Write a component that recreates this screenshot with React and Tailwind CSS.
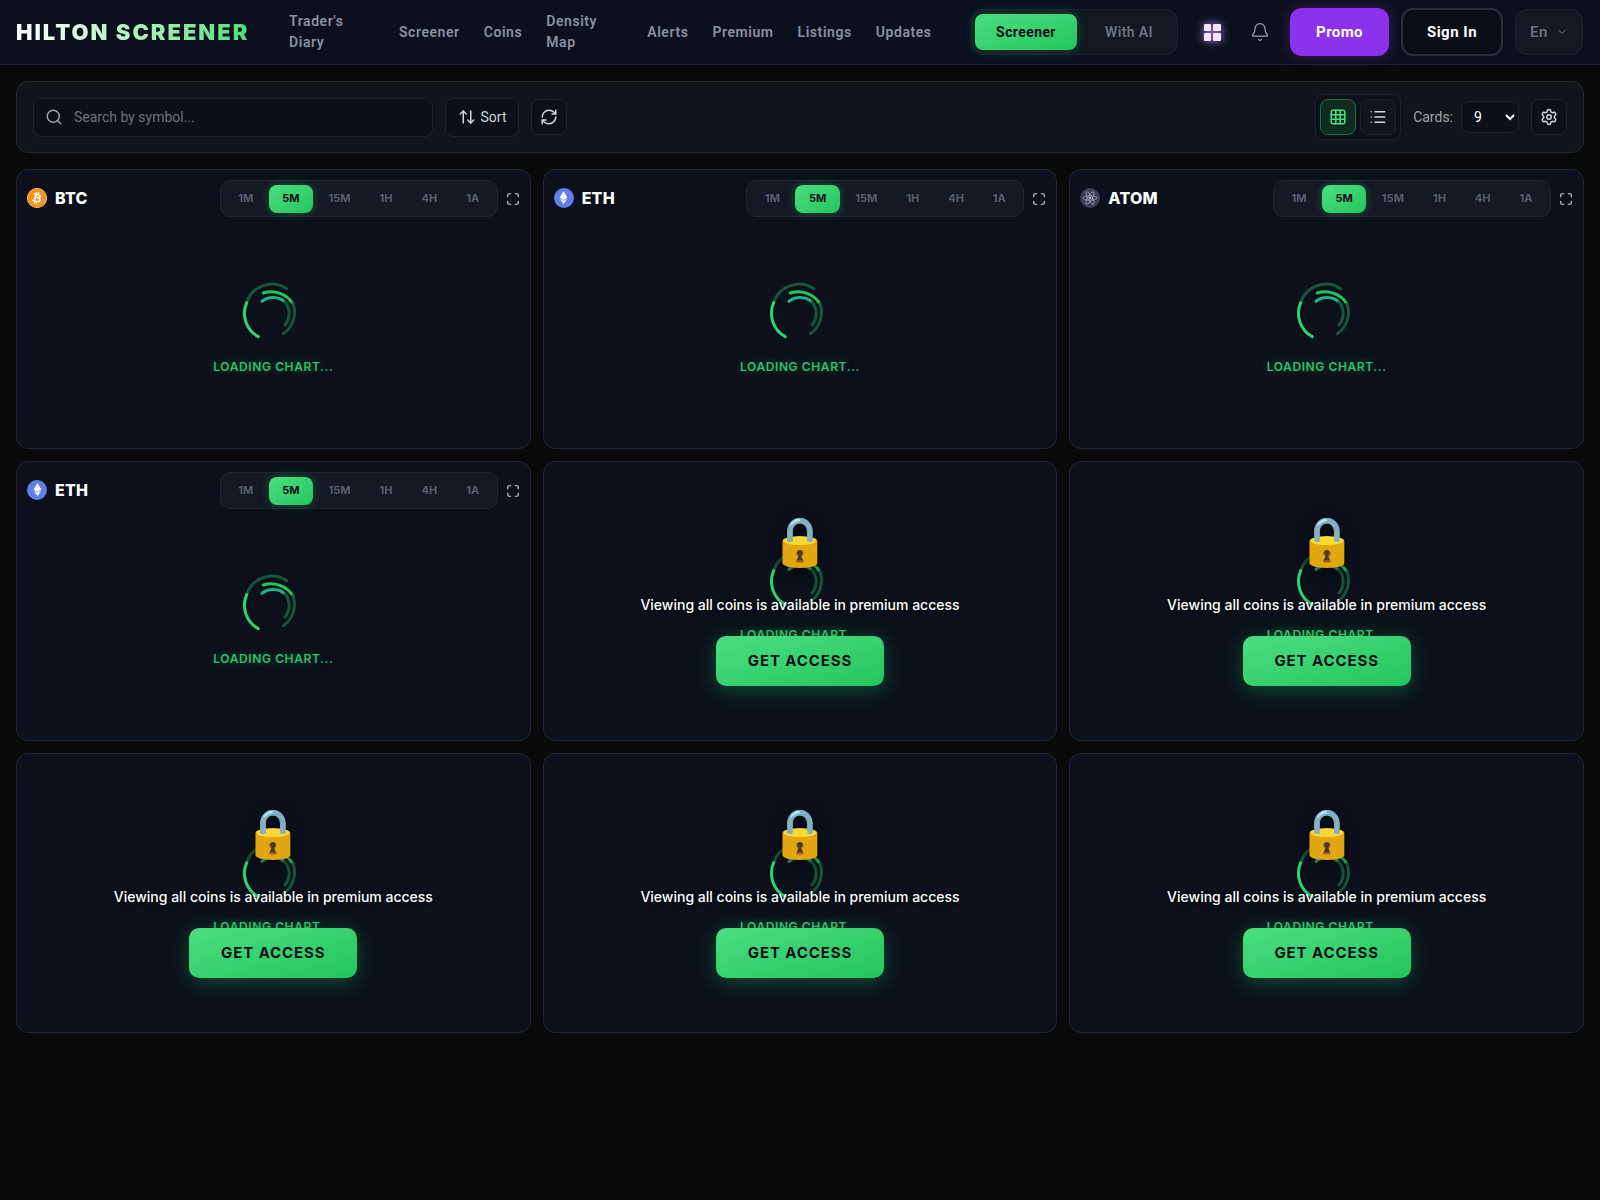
import { ArrowUpDown, Bell, ChevronDown, Grid3x3, List, Maximize, RefreshCw, Search, Settings } from 'lucide-react'
import { FaBitcoin, FaEthereum } from 'react-icons/fa'

const NAV = [
  { label: "Trader's Diary", width: 'w-[86px]' },
  { label: 'Screener' },
  { label: 'Coins' },
  { label: 'Density Map', width: 'w-[77px]' },
  { label: 'Alerts' },
  { label: 'Premium' },
  { label: 'Listings' },
  { label: 'Updates' },
]

const TIMEFRAMES = ['1M', '5M', '15M', '1H', '4H', '1A']

function Spinner() {
  return (
    <svg width="80" height="80" viewBox="0 0 80 80" fill="none" strokeLinecap="round" strokeWidth="3" className="-my-[13px] -ml-[6px]">
      <path d="M56.7 16.7 A26.5 26.5 0 0 0 16.7 30.7" stroke="#15573a" />
      <path d="M16.7 30.7 A26.5 26.5 0 0 0 28.3 64.6" stroke="#2dd46f" />
      <path d="M33.3 21 A26 26 0 0 1 63 31.7" stroke="#22c55e" />
      <path d="M63 31.7 A26 26 0 0 1 53.3 61.7" stroke="#15573a" />
      <path d="M32 29.3 A18 18 0 0 1 55 30" stroke="#1fb583" />
      <path d="M55 30 A18 18 0 0 1 55 53" stroke="#15573a" />
    </svg>
  )
}

function Loader({ locked }) {
  return (
    <div className={`flex flex-col items-center ${locked ? 'pt-[91px]' : 'pt-[69px]'}`}>
      <Spinner />
      <div className="mt-[20px] text-xs leading-4 font-semibold tracking-[0.6px] text-[#2fc06b] [text-shadow:0_0_8px_rgba(34,197,94,0.4)]">
        LOADING CHART...
      </div>
    </div>
  )
}

function CoinIcon({ symbol }) {
  if (symbol === 'BTC') {
    return (
      <div className="w-5 h-5 rounded-full bg-white flex items-center justify-center">
        <FaBitcoin size={20} className="text-[#f7931a]" />
      </div>
    )
  }
  if (symbol === 'ETH') {
    return (
      <div className="w-5 h-5 rounded-full bg-[#627eea] flex items-center justify-center">
        <FaEthereum size={13} className="text-white" />
      </div>
    )
  }
  return (
    <div className="w-5 h-5 rounded-full bg-[#3b4054] flex items-center justify-center">
      <svg width="16" height="16" viewBox="0 0 16 16" fill="none" stroke="#b8bccb" strokeWidth="0.6">
        <ellipse cx="8" cy="8" rx="7" ry="2.2" />
        <ellipse cx="8" cy="8" rx="7" ry="2.2" transform="rotate(60 8 8)" />
        <ellipse cx="8" cy="8" rx="7" ry="2.2" transform="rotate(120 8 8)" />
        <circle cx="8" cy="8" r="1" fill="#e5e7eb" stroke="none" />
      </svg>
    </div>
  )
}

function CoinCard({ symbol }) {
  return (
    <div className="h-[280px] rounded-xl border border-[#1e2534] bg-[#0b101b] px-[10px] pt-[9px]">
      <div className="flex items-center h-[37px]">
        <CoinIcon symbol={symbol} />
        <span className="ml-2 text-base font-extrabold tracking-[0.2px] text-white">{symbol}</span>
        <div className="ml-auto mt-[2px] flex items-center gap-[2px] h-[37px] p-1 rounded-[10px] border border-[#1e2534] bg-[#141924]">
          {TIMEFRAMES.map(tf => (
            <div
              key={tf}
              className={`h-7 px-[13.5px] flex items-center rounded-lg text-[11px] font-bold ${tf === '5M' ? 'bg-gradient-to-br from-[#4ade80] to-[#22c55e] text-[#0a0e17] shadow-[0_0_10px_rgba(34,197,94,0.35)]' : 'text-[#565d6c]'}`}
            >
              {tf}
            </div>
          ))}
        </div>
        <Maximize size={14} className="ml-2 mt-[2px] text-[#d1d5db]" />
      </div>
      <Loader />
    </div>
  )
}

function LockedCard() {
  return (
    <div className="relative h-[280px] rounded-xl border border-[#1e2534] bg-[#0b101b] overflow-hidden">
      <Loader locked />
      <div className="absolute inset-0 pb-1 flex flex-col items-center justify-center">
        <div className="text-5xl leading-[56px] [filter:drop-shadow(0_4px_8px_rgba(0,0,0,0.6))]">🔒</div>
        <p className="mt-[26px] text-sm leading-5 font-medium text-white [text-shadow:0_1px_4px_rgba(0,0,0,0.8)]">
          Viewing all coins is available in premium access
        </p>
        <button className="mt-[21px] w-[168px] h-[50px] pt-[1px] rounded-[10px] bg-gradient-to-br from-[#4ade80] to-[#22c55e] text-[15px] font-bold tracking-[0.9px] text-[#0a0e17] shadow-[0_4px_20px_rgba(34,197,94,0.35)]">
          GET ACCESS
        </button>
      </div>
    </div>
  )
}

export default function App() {
  return (
    <div className="h-screen bg-[#0a0a0a] [font-family:Inter,sans-serif]">
      {/* Header */}
      <header className="h-[65px] flex items-center pl-4 pr-[17px] bg-[#0b101c] border-b border-[#1c2433]">
        <div className="w-[232px] shrink-0 text-[22px] font-black tracking-[1.95px] whitespace-nowrap bg-gradient-to-r from-white to-[#4ade80] bg-clip-text text-transparent">
          HILTON SCREENER
        </div>
        <nav className="ml-[41px] flex items-center gap-6 [font-family:Roboto,sans-serif]">
          {NAV.map(item => (
            <a key={item.label} className={`text-sm leading-[21px] font-semibold tracking-[0.56px] text-[#8a90a0] ${item.width || ''}`}>
              {item.label}
            </a>
          ))}
        </nav>

        <div className="ml-auto flex items-center gap-[2px] h-[46px] px-[3px] rounded-xl border border-[#1c2230] bg-[#121722] [font-family:Roboto,sans-serif]">
          <div className="w-[102px] h-9 flex items-center justify-center rounded-lg bg-gradient-to-br from-[#4ade80] to-[#22c55e] text-sm font-bold tracking-[0.4px] text-[#0a0e17] shadow-[0_0_12px_rgba(34,197,94,0.3)]">
            Screener
          </div>
          <div className="w-[95px] h-9 pl-[5px] flex items-center justify-center text-sm font-semibold tracking-[0.4px] text-[#6b7280]">
            With AI
          </div>
        </div>
        <button className="ml-3 w-11 h-11 flex items-center justify-center">
          <div className="grid grid-cols-2 gap-[2px] w-[17px] h-[17px] [filter:drop-shadow(0_0_4px_#c084fc)]">
            <div className="bg-[#f0e6fb] rounded-[1px]" />
            <div className="bg-[#f0e6fb] rounded-[1px]" />
            <div className="bg-[#f0e6fb] rounded-[1px]" />
            <div className="bg-[#f0e6fb] rounded-[1px]" />
          </div>
        </button>
        <button className="ml-1 w-11 h-11 flex items-center justify-center text-[#9ca3af]">
          <Bell size={20} strokeWidth={1.5} />
        </button>
        <button className="ml-2 w-[99px] h-12 rounded-xl bg-[#8b32ea] text-[15px] font-bold tracking-[0.4px] text-white shadow-[0_0_14px_rgba(147,51,234,0.35)] [font-family:Roboto,sans-serif]">
          Promo
        </button>
        <button className="ml-3 w-[102px] h-12 rounded-xl border-2 border-[#2a2f3c] bg-[#0a0e17] text-[15px] font-bold tracking-[0.5px] text-white [font-family:Roboto,sans-serif]">
          Sign In
        </button>
        <button className="ml-3 w-[68px] h-[46px] flex items-center justify-center gap-2 rounded-xl border border-[#1f2633] bg-[#131823] text-[15px] font-semibold tracking-[0.5px] text-[#6b7280] [font-family:Roboto,sans-serif]">
          En
          <ChevronDown size={12} />
        </button>
      </header>

      <main className="p-4 flex flex-col gap-4">
        {/* Toolbar */}
        <div className="flex items-center h-[72px] px-4 rounded-xl border border-[#23262e] bg-[#11141b] [font-family:Roboto,sans-serif]">
          <div className="relative w-[400px]">
            <Search size={18} className="absolute left-[12px] top-[10px] text-[#9ca3af]" />
            <input
              placeholder="Search by symbol..."
              className="w-full h-[39px] pl-10 pr-3 rounded-lg border border-[#1c2230] bg-[#0a0f18] text-sm text-white placeholder:text-[#6b7280] outline-none"
            />
          </div>
          <button className="ml-3 w-[74px] h-[39px] flex items-center justify-center gap-[5px] rounded-lg border border-[#1c2230] bg-[#0a0f18] text-sm text-[#d1d5db]">
            <ArrowUpDown size={18} />
            Sort
          </button>
          <button className="ml-3 w-9 h-9 flex items-center justify-center rounded-lg border border-[#1c2230] bg-[#0a0f18] text-[#d1d5db]">
            <RefreshCw size={18} />
          </button>

          <div className="ml-auto flex items-center gap-1 p-1 rounded-lg border border-[#1c2230] bg-[#0c1019]">
            <button className="w-9 h-9 flex items-center justify-center rounded-lg border border-[#1f6b41] bg-[#0f2a20] text-[#4ade80]">
              <Grid3x3 size={18} />
            </button>
            <button className="w-9 h-9 flex items-center justify-center rounded-lg border border-[#1c2230] bg-[#11141b] text-[#d1d5db]">
              <List size={18} />
            </button>
          </div>
          <span className="ml-3 text-sm text-[#9ca3af]">Cards:</span>
          <select className="ml-2 w-[58px] h-8 px-2 rounded-lg border border-[#1c2230] bg-[#0a0f18] text-sm text-white outline-none">
            <option>9</option>
            <option>12</option>
            <option>16</option>
          </select>
          <button className="ml-3 w-9 h-9 flex items-center justify-center rounded-lg border border-[#1c2230] bg-[#0a0f18] text-[#d1d5db]">
            <Settings size={18} />
          </button>
        </div>

        {/* Cards */}
        <div className="grid grid-cols-3 gap-3">
          <CoinCard symbol="BTC" />
          <CoinCard symbol="ETH" />
          <CoinCard symbol="ATOM" />
          <CoinCard symbol="ETH" />
          <LockedCard />
          <LockedCard />
          <LockedCard />
          <LockedCard />
          <LockedCard />
        </div>
      </main>
    </div>
  )
}
